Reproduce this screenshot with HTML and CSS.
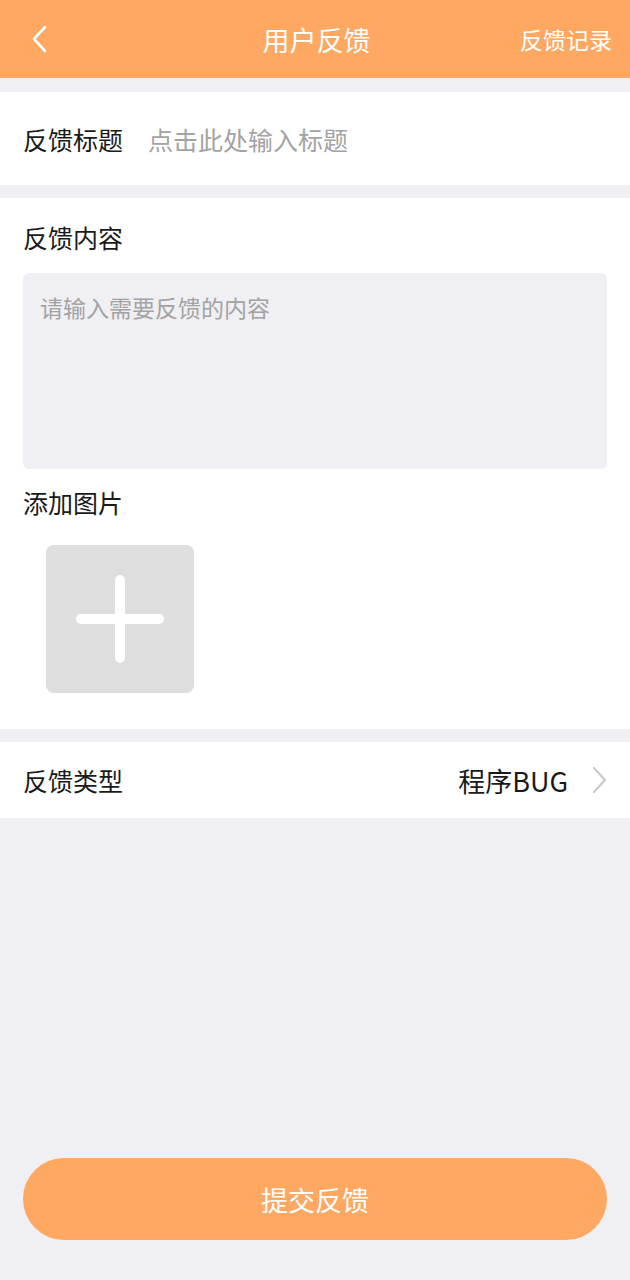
FILE: index.html
```html
<!DOCTYPE html>
<html lang="zh-CN">
<head>
  <meta charset="UTF-8" />
  <meta name="viewport" content="width=device-width, initial-scale=1.0" />
  <title>用户反馈</title>
  <link rel="stylesheet" href="styles.css">
</head>
<body>
  <div class="page">
    <header class="nav">
      <span class="nav-back">
        <svg width="16" height="28" viewBox="0 0 16 28"><path d="M14 2 L3 14 L14 26" fill="none" stroke="#fff" stroke-width="2.6" stroke-linecap="round" stroke-linejoin="round"/></svg>
      </span>
      <span class="nav-title">用户反馈</span>
      <span class="nav-right">反馈记录</span>
    </header>

    <section class="card row-title">
      <span class="label">反馈标题</span>
      <span class="placeholder">点击此处输入标题</span>
    </section>

    <section class="card content">
      <div class="label">反馈内容</div>
      <div class="textarea">请输入需要反馈的内容</div>
      <div class="label label-pic">添加图片</div>
      <div class="pic-add">
        <svg width="88" height="88" viewBox="0 0 88 88"><path d="M44 5 V83 M5 44 H83" stroke="#fff" stroke-width="10" stroke-linecap="round"/></svg>
      </div>
    </section>

    <section class="card row-type">
      <span class="label">反馈类型</span>
      <span class="type-value">程序BUG
        <svg width="16" height="28" viewBox="0 0 16 28"><path d="M2 2 L13 14 L2 26" fill="none" stroke="#c8c8cc" stroke-width="2" stroke-linecap="round" stroke-linejoin="round"/></svg>
      </span>
    </section>

    <div class="spacer"></div>

    <div class="submit">提交反馈</div>
  </div>
</body>
</html>
```

FILE: styles.css
```css
* { box-sizing: border-box; }
body { margin: 0; background: #efeff4; font-family: "Noto Sans CJK SC", "Noto Sans", sans-serif; color: #1a1a1a; }
.page { display: flex; flex-direction: column; height: 1280px; }
.nav { height: 78px; background: #ffa862; display: grid; grid-template-columns: 1fr auto 1fr; align-items: center; padding: 0 18px 0 31px; color: #fff; flex-shrink: 0; }
.nav-back { display: flex; align-items: center; }
.nav-title { font-size: 27px; margin-left: -10px; }
.nav-right { text-align: right; font-size: 23px; }
.card { background: #fff; margin-top: 13px; }
.nav + .card { margin-top: 14px; }
.label { font-size: 25px; }
.row-title { height: 93px; display: flex; align-items: center; padding: 0 23px; gap: 25px; }
.placeholder { color: #a3a3a3; font-size: 25px; }
.content { padding: 21px 23px 36px; }
.textarea { margin-top: 18px; height: 196px; background: #efeff4; border-radius: 6px; padding: 20px 17px; color: #a3a3a3; font-size: 23px; line-height: 28px; }
.label-pic { margin-top: 15px; }
.pic-add { margin: 25px 0 0 23px; width: 148px; height: 148px; background: #dedede; border-radius: 8px; display: flex; align-items: center; justify-content: center; }
.row-type { height: 76px; display: flex; align-items: center; justify-content: space-between; padding: 0 22px 0 23px; }
.type-value { font-size: 27px; display: flex; align-items: center; gap: 24px; }
.spacer { flex: 1; }
.submit { margin: 0 23px 40px; height: 82px; border-radius: 41px; background: #ffa862; color: #fff; font-size: 27px; display: flex; align-items: center; justify-content: center; }
```
